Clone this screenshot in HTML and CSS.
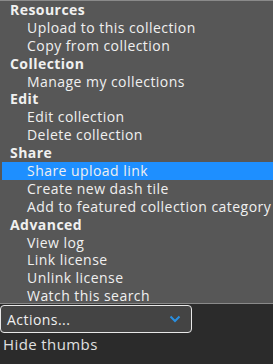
FILE: index.html
```html
<!DOCTYPE html>
<html>
<head>
<meta charset="utf-8">
<link rel="stylesheet" href="styles.css">
</head>
<body>
<div class="page">
  <ul class="listbox">
    <li class="group">Resources</li>
    <li class="opt">Upload to this collection</li>
    <li class="opt">Copy from collection</li>
    <li class="group">Collection</li>
    <li class="opt">Manage my collections</li>
    <li class="group">Edit</li>
    <li class="opt">Edit collection</li>
    <li class="opt">Delete collection</li>
    <li class="group">Share</li>
    <li class="opt selected">Share upload link</li>
    <li class="opt">Create new dash tile</li>
    <li class="opt">Add to featured collection category</li>
    <li class="group">Advanced</li>
    <li class="opt">View log</li>
    <li class="opt">Link license</li>
    <li class="opt">Unlink license</li>
    <li class="opt">Watch this search</li>
  </ul>
  <div class="select">
    <span class="select-label">Actions...</span>
    <svg class="chev" width="12" height="8" viewBox="0 0 12 8"><path d="M1.5 1.5 L6 6 L10.5 1.5" fill="none" stroke="#2a8fe0" stroke-width="2"/></svg>
  </div>
  <div class="hide">Hide thumbs</div>
</div>
</body>
</html>
```
FILE: styles.css
```css
html, body {
  margin: 0;
  padding: 0;
  background: #2b2b2b;
  width: 273px;
  height: 364px;
  overflow: hidden;
}
.page {
  font-family: "Open Sans", "Noto Sans", sans-serif;
  color: #f0f0f0;
}
.listbox {
  list-style: none;
  margin: 0;
  padding: 0 0 0 2px;
  background: #575757;
  border-top: 1px solid #8a8a8a;
  border-bottom: 1px solid #8a8a8a;
  height: 304px;
  box-sizing: border-box;
}
.listbox li {
  height: 17.9px;
  line-height: 17.9px;
  font-size: 14px;
  letter-spacing: 0.45px;
  white-space: nowrap;
}
.group {
  font-weight: bold;
  padding-left: 8px;
  letter-spacing: 0.2px;
}
.opt {
  padding-left: 25px;
}
.selected {
  background: #1e8fff;
}
.select {
  margin-top: 1px;
  width: 192px;
  height: 28px;
  box-sizing: border-box;
  border: 1px solid #e8e8e8;
  border-radius: 4px;
  background: #444444;
  display: flex;
  align-items: center;
  justify-content: space-between;
  padding: 0 10px 0 6px;
  font-size: 14px;
  letter-spacing: 0.45px;
}
.hide {
  padding: 1px 0 0 3px;
  font-size: 15px;
  letter-spacing: 0.4px;
  color: #e0e0e0;
}
```
